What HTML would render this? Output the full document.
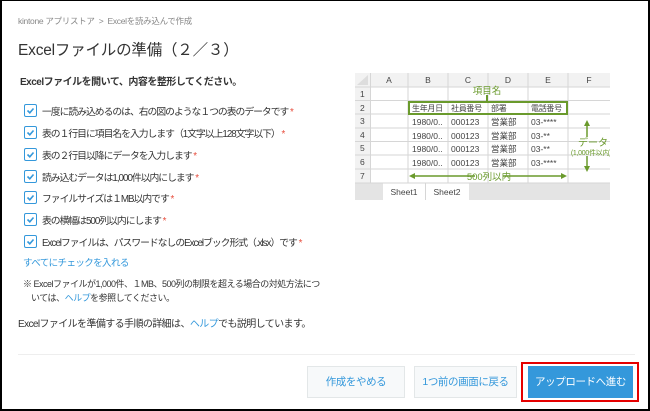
<!DOCTYPE html>
<html><head><meta charset="utf-8"><style>
*{margin:0;padding:0;box-sizing:border-box}
body{width:650px;height:411px;overflow:hidden;background:#fff;font-family:"Liberation Sans","Noto Sans CJK JP",sans-serif;color:#333;position:relative}
.frame{position:absolute;left:0;top:0;width:650px;height:411px;border:2px solid #000;border-top-width:1px}
.a{position:absolute;white-space:nowrap}
.cb{position:absolute;left:24px;width:13px;height:13px;border:1.5px solid #3498db;border-radius:2px;background:#fff}
.cb svg{position:absolute;left:1px;top:1px}
.it{position:absolute;left:42px;font-size:9.8px;letter-spacing:-1px;color:#333}
.st{color:#e74c3c}
.btn{position:absolute;top:366px;height:32px;background:#f7f9fa;border:1px solid #e3e7e8;color:#3498db;font-size:10.5px;letter-spacing:-0.4px;text-align:center;line-height:30px}
</style></head><body>
<div class="a" style="left:18px;top:15px;font-size:8.5px;letter-spacing:-0.3px;color:#888">kintone アプリストア&nbsp;&nbsp;&gt;&nbsp;&nbsp;Excelを読み込んで作成</div>
<div class="a" style="left:18px;top:38px;font-size:15.5px;letter-spacing:-0.2px;color:#333">Excelファイルの準備（２／３）</div>
<div class="a" style="left:20px;top:73px;font-size:10px;letter-spacing:-0.5px;font-weight:bold;color:#333">Excelファイルを開いて、内容を整形してください。</div>

<div class="cb" style="top:104px"><svg width="9" height="9"><path d="M1.5 4.5 L3.8 6.8 L7.5 2.5" stroke="#3498db" stroke-width="1.6" fill="none"/></svg></div>
<div class="it" style="top:104px">一度に読み込めるのは、右の図のような１つの表のデータです <span class="st">*</span></div>
<div class="cb" style="top:126px"><svg width="9" height="9"><path d="M1.5 4.5 L3.8 6.8 L7.5 2.5" stroke="#3498db" stroke-width="1.6" fill="none"/></svg></div>
<div class="it" style="top:126px">表の１行目に項目名を入力します（1文字以上128文字以下） <span class="st">*</span></div>
<div class="cb" style="top:148px"><svg width="9" height="9"><path d="M1.5 4.5 L3.8 6.8 L7.5 2.5" stroke="#3498db" stroke-width="1.6" fill="none"/></svg></div>
<div class="it" style="top:148px">表の２行目以降にデータを入力します <span class="st">*</span></div>
<div class="cb" style="top:170px"><svg width="9" height="9"><path d="M1.5 4.5 L3.8 6.8 L7.5 2.5" stroke="#3498db" stroke-width="1.6" fill="none"/></svg></div>
<div class="it" style="top:170px">読み込むデータは1,000件以内にします <span class="st">*</span></div>
<div class="cb" style="top:191px"><svg width="9" height="9"><path d="M1.5 4.5 L3.8 6.8 L7.5 2.5" stroke="#3498db" stroke-width="1.6" fill="none"/></svg></div>
<div class="it" style="top:191px">ファイルサイズは１MB以内です <span class="st">*</span></div>
<div class="cb" style="top:213px"><svg width="9" height="9"><path d="M1.5 4.5 L3.8 6.8 L7.5 2.5" stroke="#3498db" stroke-width="1.6" fill="none"/></svg></div>
<div class="it" style="top:213px">表の横幅は500列以内にします <span class="st">*</span></div>
<div class="cb" style="top:235px"><svg width="9" height="9"><path d="M1.5 4.5 L3.8 6.8 L7.5 2.5" stroke="#3498db" stroke-width="1.6" fill="none"/></svg></div>
<div class="it" style="top:235px">Excelファイルは、パスワードなしのExcelブック形式（.xlsx）です <span class="st">*</span></div>
<div class="a" style="left:23px;top:255px;font-size:9.5px;letter-spacing:-0.6px;color:#3498db">すべてにチェックを入れる</div>
<div class="a" style="left:23px;top:277px;font-size:9px;letter-spacing:-0.5px;color:#333;line-height:14px">※ Excelファイルが1,000件、１MB、500列の制限を超える場合の対処方法につ<br>&nbsp;&nbsp;&nbsp;&nbsp;いては、<span style="color:#3498db">ヘルプ</span>を参照してください。</div>
<div class="a" style="left:18px;top:315px;font-size:10px;letter-spacing:-0.6px;color:#333">Excelファイルを準備する手順の詳細は、<span style="color:#3498db">ヘルプ</span>でも説明しています。</div>

<!-- spreadsheet -->
<svg class="a" style="left:355px;top:73px" width="255" height="128" font-family="Liberation Sans,Noto Sans CJK JP,sans-serif" font-size="8.5" fill="#444">
<rect x="0" y="0" width="255" height="14" fill="#f2f2f2"/>
<rect x="0" y="0" width="15" height="110" fill="#f2f2f2"/>
<rect x="0" y="110" width="255" height="17" fill="#e4e4e4"/>
<rect x="28" y="110" width="42" height="17" fill="#fff"/><rect x="71" y="110" width="43" height="17" fill="#fff"/>
<g stroke="#d6d6d6" stroke-width="1">
<line x1="0" y1="14" x2="255" y2="14"/><line x1="0" y1="27.5" x2="255" y2="27.5"/><line x1="0" y1="41" x2="255" y2="41"/><line x1="0" y1="55" x2="255" y2="55"/><line x1="0" y1="68.5" x2="255" y2="68.5"/><line x1="0" y1="82" x2="255" y2="82"/><line x1="0" y1="96" x2="255" y2="96"/><line x1="0" y1="110" x2="255" y2="110"/>
<line x1="15.5" y1="0" x2="15.5" y2="110"/><line x1="53" y1="0" x2="53" y2="110"/><line x1="93" y1="0" x2="93" y2="110"/><line x1="133" y1="0" x2="133" y2="110"/><line x1="173" y1="0" x2="173" y2="110"/><line x1="213" y1="0" x2="213" y2="110"/>
<line x1="70.5" y1="110" x2="70.5" y2="127"/>
</g>
<path d="M2 12 L13 2 L13 12Z" fill="#ddd"/>
<g text-anchor="middle"><text x="34" y="10">A</text><text x="73" y="10">B</text><text x="113" y="10">C</text><text x="153" y="10">D</text><text x="193" y="10">E</text><text x="234" y="10">F</text>
<text x="49" y="122">Sheet1</text><text x="92" y="122">Sheet2</text></g>
<g><text x="5" y="24">1</text><text x="5" y="38">2</text><text x="5" y="51">3</text><text x="5" y="65">4</text><text x="5" y="78">5</text><text x="5" y="92">6</text><text x="5" y="106">7</text></g>
<g font-size="8" letter-spacing="-0.3"><text x="57" y="38">生年月日</text><text x="96" y="38">社員番号</text><text x="136" y="38">部署</text><text x="176" y="38">電話番号</text></g>
<g><text x="57" y="52">1980/0..</text><text x="96" y="52">000123</text><text x="136" y="52">営業部</text><text x="176" y="52">03-****</text>
<text x="57" y="66">1980/0..</text><text x="96" y="66">000123</text><text x="136" y="66">営業部</text><text x="176" y="66">03-**</text>
<text x="57" y="79">1980/0..</text><text x="96" y="79">000123</text><text x="136" y="79">営業部</text><text x="176" y="79">03-**</text>
<text x="57" y="93">1980/0..</text><text x="96" y="93">000123</text><text x="136" y="93">営業部</text><text x="176" y="93">03-****</text></g>
<rect x="54" y="29" width="158" height="12" fill="none" stroke="#6a9a2c" stroke-width="2"/>
<line x1="132" y1="22" x2="132" y2="29" stroke="#6a9a2c" stroke-width="2"/>
<text x="132" y="21" text-anchor="middle" fill="#6a9a2c" font-size="9.5">項目名</text>
<g stroke="#6a9a2c" stroke-width="1.5" fill="#6a9a2c">
<line x1="56" y1="103" x2="120" y2="103"/><line x1="148" y1="103" x2="210" y2="103"/>
<path d="M54 103 l6 -3 v6z" stroke="none"/><path d="M212 103 l-6 -3 v6z" stroke="none"/>
<line x1="232" y1="50" x2="232" y2="64"/><line x1="232" y1="83" x2="232" y2="97"/>
<path d="M232 47 l-3 6 h6z" stroke="none"/><path d="M232 99 l-3 -6 h6z" stroke="none"/>
</g>
<text x="134" y="107" text-anchor="middle" fill="#6a9a2c" font-size="9.5">500列以内</text>
<text x="238" y="73" text-anchor="middle" fill="#6a9a2c" font-size="10">データ</text>
<text x="236" y="82" text-anchor="middle" fill="#6a9a2c" font-size="7" letter-spacing="-0.3">(1,000件以内)</text>
</svg>

<div class="a" style="left:18px;top:354px;width:617px;height:1px;background:#eee"></div>
<div class="btn" style="left:307px;width:98px">作成をやめる</div>
<div class="btn" style="left:414px;width:103px">1つ前の画面に戻る</div>
<div class="a" style="left:521px;top:362px;width:118px;height:40px;border:2px solid #e60000"></div>
<div class="a" style="left:528px;top:366px;width:105px;height:32px;background:#3498db;color:#fff;font-size:10.5px;letter-spacing:-0.4px;text-align:center;line-height:32px">アップロードへ進む</div>
<div class="frame"></div>
</body></html>
